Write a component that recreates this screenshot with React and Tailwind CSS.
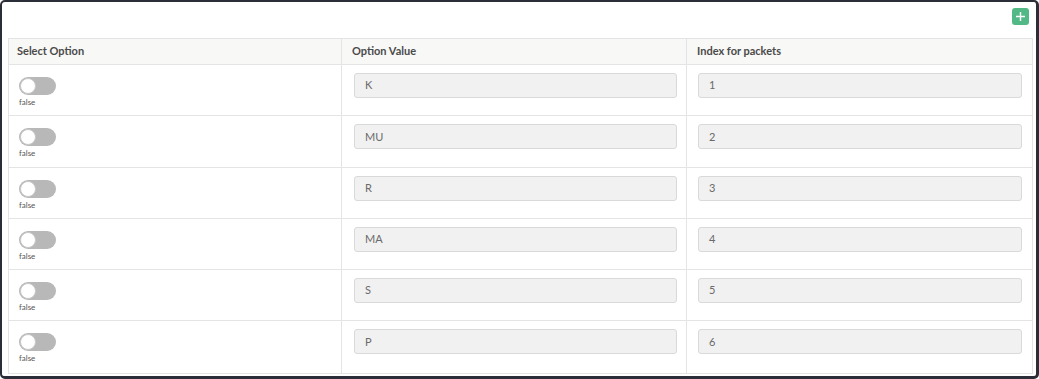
import React from 'react';

const rows = [
  { value: 'K', index: '1' },
  { value: 'MU', index: '2' },
  { value: 'R', index: '3' },
  { value: 'MA', index: '4' },
  { value: 'S', index: '5' },
  { value: 'P', index: '6' },
];

function Toggle() {
  return (
    <div className="flex flex-col items-start">
      <div className="relative w-[37px] h-[18px] rounded-full bg-[#b8b8b8]">
        <div className="absolute left-[1px] top-[1px] w-[16px] h-[16px] rounded-full bg-white border border-[#c8c8c8]" />
      </div>
      <span className="mt-[2px] text-[8px] leading-[10px] text-[#555]">false</span>
    </div>
  );
}

function Field({ value }) {
  return (
    <div className="h-[25px] rounded-[3px] border border-[#d9d9d9] bg-[#f1f1f1] px-[10px] flex items-center text-[11px] text-[#6a6a6a]">
      {value}
    </div>
  );
}

export default function App() {
  return (
    <div
      className="w-[1039px] h-[379px] bg-white rounded-[5px] border-t-2 border-l-2 border-r-[3px] border-b-[3px] border-[#2b2e38] pl-[6px] pr-[3px]"
      style={{ fontFamily: 'Lato, "Open Sans", sans-serif' }}
    >
      <div className="h-[36px] flex justify-end items-start pt-[6px] pr-[4px]">
        <button className="w-[17px] h-[17px] rounded-[3px] bg-[#52b986] flex items-center justify-center">
          <svg width="11" height="11" viewBox="0 0 11 11">
            <path d="M5.5 1v9M1 5.5h9" stroke="white" strokeWidth="1.4" />
          </svg>
        </button>
      </div>
      <div className="w-[1025px] border border-[#e4e4e4]">
        <div className="grid grid-cols-[333px_345px_1fr] h-[26px] bg-[#f8f8f6] border-b border-[#e4e4e4] text-[11px] font-bold text-[#4a4a4a]">
          <div className="flex items-center pl-[8px] border-r border-[#e4e4e4]">Select Option</div>
          <div className="flex items-center pl-[10px] border-r border-[#e4e4e4]">Option Value</div>
          <div className="flex items-center pl-[10px]">Index for packets</div>
        </div>
        {rows.map((r, i) => (
          <div
            key={i}
            className={`grid grid-cols-[333px_345px_1fr] h-[51.3px] ${i < rows.length - 1 ? 'border-b border-[#e4e4e4]' : ''}`}
          >
            <div className="pl-[10px] pt-[12px] border-r border-[#e4e4e4]">
              <Toggle />
            </div>
            <div className="pl-[12px] pr-[9px] pt-[8px] border-r border-[#e4e4e4]">
              <Field value={r.value} />
            </div>
            <div className="pl-[11px] pr-[10px] pt-[8px]">
              <Field value={r.index} />
            </div>
          </div>
        ))}
      </div>
    </div>
  );
}
